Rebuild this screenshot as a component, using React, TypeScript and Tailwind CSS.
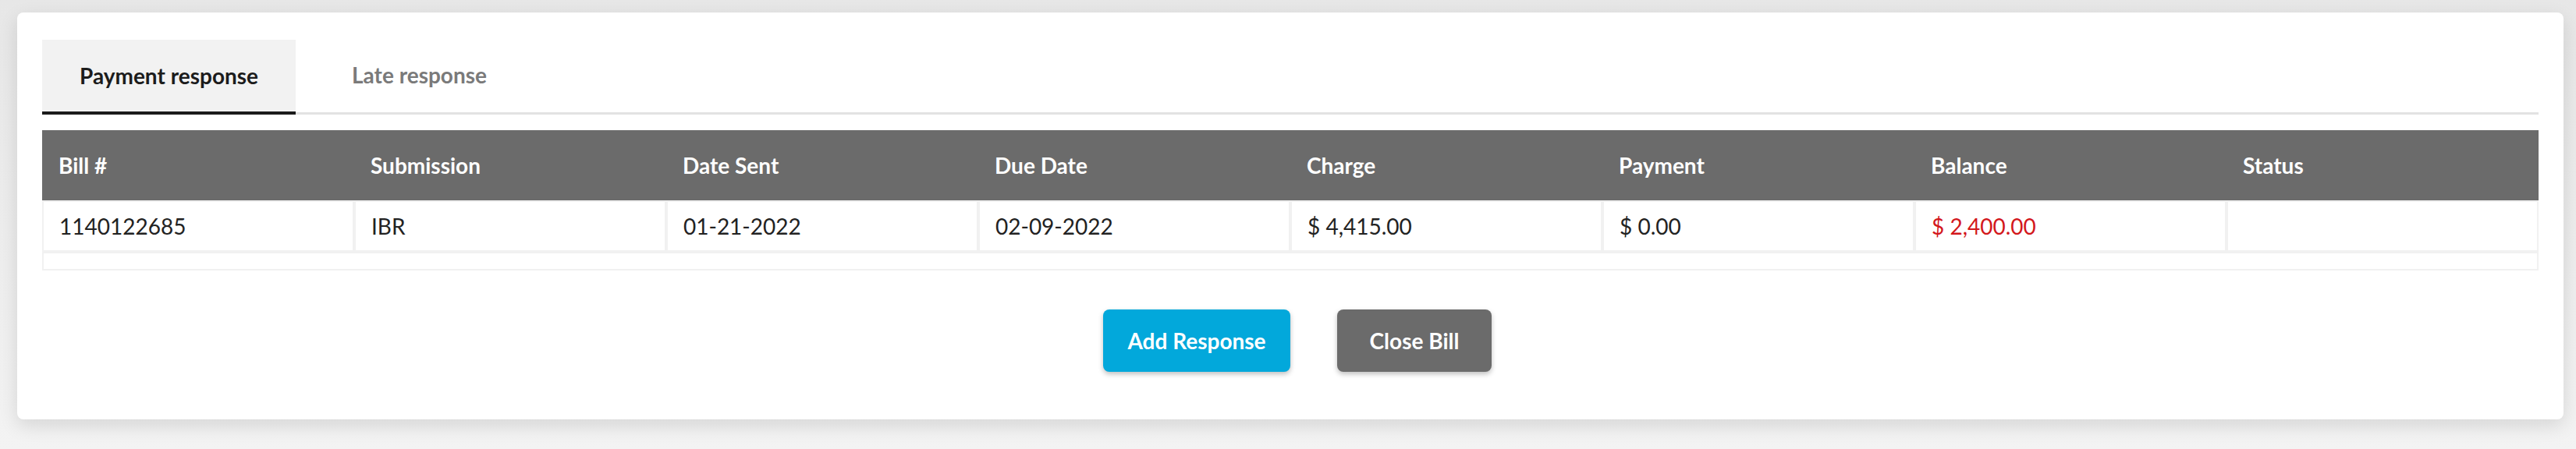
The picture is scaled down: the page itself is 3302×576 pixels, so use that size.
import React from "react";

const headers = ["Bill #", "Submission", "Date Sent", "Due Date", "Charge", "Payment", "Balance", "Status"];

export default function App() {
  return (
    <div
      className="w-[3302px] h-[576px] bg-linear-to-b from-[#e7e7e7] to-[#f3f3f3] pl-[22px] pr-[16px] pt-[16px] overflow-hidden"
      style={{ fontFamily: "Lato, 'Open Sans', sans-serif" }}
    >
      <div className="bg-white rounded-[8px] shadow-[0_8px_24px_rgba(0,0,0,0.12)] px-[32px] pt-[32px] pb-[61px]">
        {/* Tabs */}
        <div className="flex items-end border-b-[3px] border-[#e2e2e2]">
          <div className="h-[96px] px-[48px] flex items-center bg-[#f2f2f2] border-b-[4px] border-[#1b1b1b] -mb-[3px] text-[28px] font-bold text-[#1c1c1c]">
            Payment response
          </div>
          <div className="h-[96px] px-[48px] ml-[24px] flex items-center text-[28px] font-bold text-[#7a7a7a]">
            Late response
          </div>
        </div>

        {/* Table */}
        <table className="mt-[20px] w-[3200px] table-fixed border-separate border-spacing-0 text-[28px]">
          <thead>
            <tr className="bg-[#6b6b6b]">
              {headers.map((h) => (
                <th key={h} className="h-[90px] pl-[21px] text-left font-bold text-white">
                  {h}
                </th>
              ))}
            </tr>
          </thead>
          <tbody>
            <tr>
              {[
                "1140122685",
                "IBR",
                "01-21-2022",
                "02-09-2022",
                "$ 4,415.00",
                "$ 0.00",
                "$ 2,400.00",
                "",
              ].map((v, i) => (
                <td
                  key={i}
                  className={`h-[66px] border-[2px] border-[#f1f1f1] pl-[20px] ${
                    i === 6 ? "text-[#d3171c]" : "text-[#222222]"
                  }`}
                >
                  {v}
                </td>
              ))}
            </tr>
            <tr>
              <td colSpan={8} className="h-[24px] border-[2px] border-[#f1f1f1]"></td>
            </tr>
          </tbody>
        </table>

        {/* Buttons */}
        <div className="mt-[50px] flex justify-center gap-[60px] pl-[18px]">
          <button className="h-[80px] w-[240px] rounded-[8px] bg-[#02a8db] text-white text-[28px] font-bold shadow-[0_3px_6px_rgba(0,0,0,0.25)]">
            Add Response
          </button>
          <button className="h-[80px] w-[198px] rounded-[8px] bg-[#6b6b6b] text-white text-[28px] font-bold shadow-[0_3px_6px_rgba(0,0,0,0.25)]">
            Close Bill
          </button>
        </div>
      </div>
    </div>
  );
}
